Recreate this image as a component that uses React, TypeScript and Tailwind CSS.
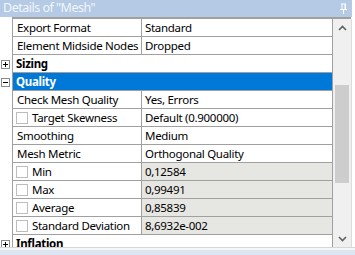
import React from 'react';

type Row =
  | { kind: 'prop'; name: string; value: string; check?: boolean; shaded?: boolean }
  | { kind: 'group'; name: string; open: boolean; selected?: boolean };

const rows: Row[] = [
  { kind: 'prop', name: 'Export Format', value: 'Standard' },
  { kind: 'prop', name: 'Element Midside Nodes', value: 'Dropped' },
  { kind: 'group', name: 'Sizing', open: false },
  { kind: 'group', name: 'Quality', open: true, selected: true },
  { kind: 'prop', name: 'Check Mesh Quality', value: 'Yes, Errors' },
  { kind: 'prop', name: 'Target Skewness', value: 'Default (0.900000)', check: true },
  { kind: 'prop', name: 'Smoothing', value: 'Medium' },
  { kind: 'prop', name: 'Mesh Metric', value: 'Orthogonal Quality' },
  { kind: 'prop', name: 'Min', value: '0,12584', check: true, shaded: true },
  { kind: 'prop', name: 'Max', value: '0,99491', check: true, shaded: true },
  { kind: 'prop', name: 'Average', value: '0,85839', check: true, shaded: true },
  { kind: 'prop', name: 'Standard Deviation', value: '8,6932e-002', check: true, shaded: true },
  { kind: 'group', name: 'Inflation', open: false },
];

const ExpandBox = ({ open }: { open: boolean }) => (
  <div className="relative w-[9px] h-[9px] border border-[#8a8a8a] bg-white ml-[1px]">
    <div className="absolute left-[1px] top-[3px] w-[5px] h-px bg-black" />
    {!open && <div className="absolute left-[3px] top-[1px] w-px h-[5px] bg-black" />}
  </div>
);

const PinIcon = () => (
  <svg width="9" height="11" viewBox="0 0 9 11" className="text-white">
    <rect x="2" y="0.5" width="5" height="1" fill="currentColor" />
    <rect x="2.5" y="1" width="1" height="5" fill="currentColor" />
    <rect x="5.5" y="1" width="1.5" height="5" fill="currentColor" />
    <rect x="1" y="6" width="7" height="1" fill="currentColor" />
    <rect x="4" y="7" width="1" height="4" fill="currentColor" />
  </svg>
);

const Chevron = ({ up }: { up?: boolean }) => (
  <svg width="9" height="6" viewBox="0 0 9 6">
    <path
      d={up ? 'M1 5 L4.5 1.5 L8 5' : 'M1 1 L4.5 4.5 L8 1'}
      fill="none"
      stroke="#606060"
      strokeWidth="1.6"
    />
  </svg>
);

export default function App() {
  return (
    <div
      className="w-[355px] h-[255px] bg-white overflow-hidden flex flex-col text-[11.5px] tracking-[-0.3px] text-black"
      style={{ fontFamily: '"Noto Sans", "Open Sans", sans-serif' }}
    >
      {/* Title bar */}
      <div className="h-[17px] flex">
        <div className="flex-1 bg-[#b4cae5] flex items-center justify-between pl-[3px] pr-[4px]">
          <span className="text-[12.5px] leading-none tracking-[-0.5px] text-[#f3f6fa]">Details of "Mesh"</span>
          <PinIcon />
        </div>
        <div className="w-[3px] bg-white" />
      </div>
      <div className="h-[2px] flex">
        <div className="w-[12px] bg-white" />
        <div className="w-[339px] bg-[#a0a0a0]" />
      </div>

      {/* Body */}
      <div className="h-[228px] flex">
        <div className="w-[333px] overflow-hidden">
          {rows.map((row) => (
            <div key={row.name} className="flex h-[18px]">
              <div className="w-[12px] flex items-center">
                {row.kind === 'group' && <ExpandBox open={row.open} />}
              </div>
              {row.kind === 'group' ? (
                <div
                  className={`w-[321px] border-l border-r border-b border-[#a0a0a0] flex items-center pl-[3px] pt-px font-bold ${
                    row.selected ? 'bg-[#0078d7] text-white' : 'bg-white'
                  }`}
                >
                  {row.name}
                </div>
              ) : (
                <div className="w-[321px] flex border-l border-r border-b border-[#a0a0a0]">
                  <div className="w-[129px] border-r border-[#a0a0a0] flex items-center pt-px whitespace-nowrap overflow-hidden">
                    {row.check ? (
                      <>
                        <div className="w-[12px] h-[12px] shrink-0 border border-[#bdbdbd] bg-white ml-[3px] mr-[4px]" />
                        {row.name}
                      </>
                    ) : (
                      <span className="pl-[4px]">{row.name}</span>
                    )}
                  </div>
                  <div
                    className={`flex-1 flex items-center pl-[3px] pt-px whitespace-nowrap ${
                      row.shaded ? 'bg-[#e6e6e2]' : 'bg-white'
                    }`}
                  >
                    {row.value}
                  </div>
                </div>
              )}
            </div>
          ))}
        </div>

        {/* Scrollbar */}
        <div className="w-[18px] bg-[#f0f0f0] flex flex-col">
          <div className="h-[17px] flex items-center justify-center">
            <Chevron up />
          </div>
          <div className="flex-1">
            <div className="mt-[49px] mx-[2px] h-[98px] bg-[#cdcdcd]" />
          </div>
          <div className="h-[17px] flex items-center justify-center">
            <Chevron />
          </div>
        </div>
        <div className="w-[4px] border-l border-[#dcdcdc] bg-white" />
      </div>

      {/* Bottom frame */}
      <div className="h-[8px] flex flex-col border-t border-[#d6d6d6]">
        <div className="h-[2px] bg-[#f7f7f7]" />
        <div className="flex-1 bg-[#dce6f2]" />
      </div>
    </div>
  );
}
